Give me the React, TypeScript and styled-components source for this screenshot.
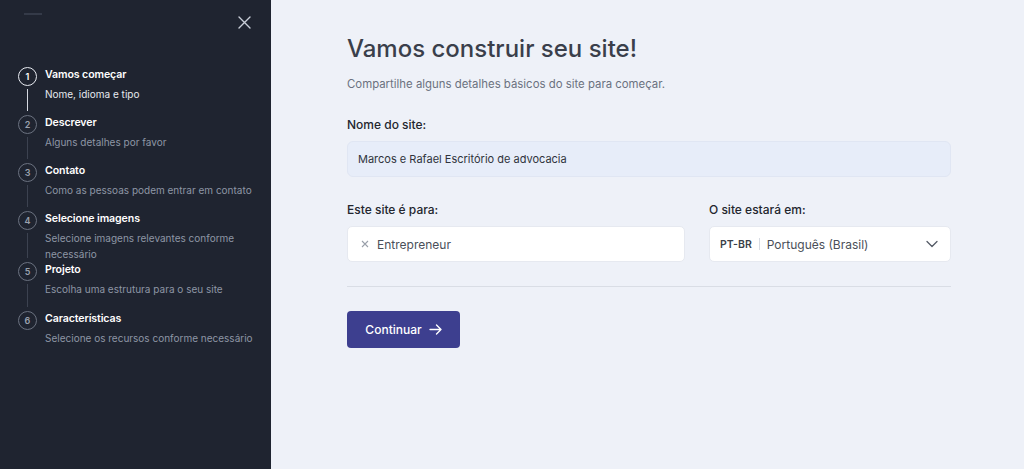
import React from "react";
import styled, { createGlobalStyle } from "styled-components";

const Global = createGlobalStyle`
  html, body { margin: 0; padding: 0; }
  body { font-family: Inter, "Noto Sans", sans-serif; background: #eef1f8; }
  #root { height: 469px; }
  * { box-sizing: border-box; }
`;

const Page = styled.div`
  display: flex;
  width: 1024px;
  height: 469px;
  overflow: hidden;
`;

const Sidebar = styled.aside`
  width: 271px;
  flex: none;
  background: #1f2430;
  display: flex;
  flex-direction: column;
  padding: 13px 0 0 18px;
`;

const SideTop = styled.div`
  display: flex;
  justify-content: space-between;
  align-items: flex-start;
  padding-right: 20px;
  height: 54px;
`;

const LogoBar = styled.div`
  width: 18px;
  height: 2px;
  margin: 0 0 0 6px;
  background: #343a48;
`;

const CloseBtn = styled.button`
  background: none;
  border: 0;
  padding: 0;
  margin-top: 3px;
  color: #c9ced8;
  display: flex;
`;

const Steps = styled.ol`
  list-style: none;
  margin: 0;
  padding: 0;
  display: flex;
  flex-direction: column;
`;

const Step = styled.li<{ $h: number }>`
  display: flex;
  gap: 8px;
  height: ${(p) => p.$h}px;
`;

const Marker = styled.div`
  width: 19px;
  flex: none;
  display: flex;
  flex-direction: column;
  align-items: center;
`;

const Circle = styled.div<{ $active?: boolean }>`
  width: 19px;
  height: 19px;
  border-radius: 50%;
  border: 1.5px solid ${(p) => (p.$active ? "#e8ebf1" : "#6b7280")};
  color: ${(p) => (p.$active ? "#ffffff" : "#9aa1ae")};
  font-size: 9px;
  font-weight: 600;
  display: flex;
  align-items: center;
  justify-content: center;
  flex: none;
`;

const Line = styled.div<{ $active?: boolean }>`
  width: 1px;
  flex: 1;
  margin: 3px 0 4px;
  background: ${(p) => (p.$active ? "#d5d9e0" : "#3c4250")};
`;

const StepText = styled.div`
  flex: 1;
  display: flex;
  flex-direction: column;
  padding-top: 1px;
`;

const StepTitle = styled.div`
  color: #ffffff;
  font-size: 10.6px;
  font-weight: 600;
  line-height: 14px;
  margin-bottom: 4px;
  letter-spacing: -0.1px;
`;

const StepSub = styled.div<{ $active?: boolean }>`
  color: ${(p) => (p.$active ? "#e6e9ef" : "#8e96a5")};
  font-size: 10px;
  line-height: 16px;
  max-width: 214px;
`;

const Main = styled.main`
  flex: 1;
  padding: 34px 73px 0 76px;
`;

const Content = styled.div`
  width: 604px;
  display: flex;
  flex-direction: column;
`;

const Title = styled.h1`
  margin: 0;
  font-size: 24px;
  font-weight: 500;
  color: #3a3f4b;
  line-height: 30px;
`;

const Lead = styled.p`
  margin: 12px 0 0;
  font-size: 11.4px;
  color: #6b7280;
  line-height: 16px;
`;

const Label = styled.label`
  display: block;
  font-size: 12px;
  font-weight: 500;
  color: #23262e;
  line-height: 16px;
  margin-bottom: 8px;
`;

const Field = styled.div<{ $mt: number }>`
  margin-top: ${(p) => p.$mt}px;
`;

const NameInput = styled.div`
  height: 36px;
  border-radius: 6px;
  background: #e7edf9;
  border: 1px solid #e0e6f3;
  display: flex;
  align-items: center;
  padding: 0 10px;
  font-size: 11px;
  color: #30343c;
`;

const Row = styled.div`
  display: grid;
  grid-template-columns: 338px 242px;
  gap: 24px;
  margin-top: 25px;
`;

const Box = styled.div`
  height: 36px;
  border-radius: 5px;
  background: #ffffff;
  border: 1px solid #e6e9f0;
  display: flex;
  align-items: center;
  font-size: 12px;
  color: #4a4f59;
`;

const TagBox = styled(Box)`
  padding: 0 13px;
  gap: 8px;
`;

const RemoveX = styled.span`
  color: #9aa0aa;
  font-size: 11px;
  display: flex;
`;

const LangBox = styled(Box)`
  padding: 0 12px 0 10px;
`;

const LangCode = styled.span`
  font-size: 10.5px;
  font-weight: 600;
  color: #3a3f49;
`;

const Sep = styled.span`
  width: 1px;
  height: 12px;
  background: #d7dbe3;
  margin: 0 7px;
`;

const LangName = styled.span`
  flex: 1;
`;

const Divider = styled.hr`
  border: 0;
  border-top: 1px solid #d9dde5;
  margin: 24px 0 0;
`;

const Button = styled.button`
  margin-top: 24px;
  align-self: flex-start;
  width: 113px;
  height: 37px;
  border: 0;
  border-radius: 4px;
  background: #3d3f8f;
  color: #ffffff;
  font-family: inherit;
  font-size: 12px;
  font-weight: 500;
  display: flex;
  align-items: center;
  justify-content: center;
  gap: 7px;
`;

const steps = [
  { n: 1, title: "Vamos começar", sub: "Nome, idioma e tipo", h: 48 },
  { n: 2, title: "Descrever", sub: "Alguns detalhes por favor", h: 48 },
  { n: 3, title: "Contato", sub: "Como as pessoas podem entrar em contato", h: 48 },
  { n: 4, title: "Selecione imagens", sub: "Selecione imagens relevantes conforme necessário", h: 51 },
  { n: 5, title: "Projeto", sub: "Escolha uma estrutura para o seu site", h: 49 },
  { n: 6, title: "Características", sub: "Selecione os recursos conforme necessário", h: 48 },
];

export default function App() {
  return (
    <>
      <Global />
      <Page>
        <Sidebar>
          <SideTop>
            <LogoBar />
            <CloseBtn aria-label="Fechar">
              <svg width="13" height="13" viewBox="0 0 13 13" fill="none" stroke="currentColor" strokeWidth="1.4" strokeLinecap="round">
                <path d="M1 1l11 11M12 1L1 12" />
              </svg>
            </CloseBtn>
          </SideTop>
          <Steps>
            {steps.map((s, i) => (
              <Step key={s.n} $h={s.h}>
                <Marker>
                  <Circle $active={i === 0}>{s.n}</Circle>
                  {i < steps.length - 1 && <Line $active={i === 0} />}
                </Marker>
                <StepText>
                  <StepTitle>{s.title}</StepTitle>
                  <StepSub $active={i === 0}>{s.sub}</StepSub>
                </StepText>
              </Step>
            ))}
          </Steps>
        </Sidebar>
        <Main>
          <Content>
            <Title>Vamos construir seu site!</Title>
            <Lead>Compartilhe alguns detalhes básicos do site para começar.</Lead>
            <Field $mt={25}>
              <Label>Nome do site:</Label>
              <NameInput>Marcos e Rafael Escritório de advocacia</NameInput>
            </Field>
            <Row>
              <div>
                <Label>Este site é para:</Label>
                <TagBox>
                  <RemoveX>
                    <svg width="8" height="8" viewBox="0 0 8 8" stroke="currentColor" strokeWidth="1.1">
                      <path d="M1 1l6 6M7 1L1 7" />
                    </svg>
                  </RemoveX>
                  Entrepreneur
                </TagBox>
              </div>
              <div>
                <Label>O site estará em:</Label>
                <LangBox>
                  <LangCode>PT-BR</LangCode>
                  <Sep />
                  <LangName>Português (Brasil)</LangName>
                  <svg width="12" height="8" viewBox="0 0 12 8" fill="none" stroke="#555b66" strokeWidth="1.3" strokeLinecap="round" strokeLinejoin="round">
                    <path d="M1 1.5l5 5 5-5" />
                  </svg>
                </LangBox>
              </div>
            </Row>
            <Divider />
            <Button>
              Continuar
              <svg width="13" height="11" viewBox="0 0 13 11" fill="none" stroke="currentColor" strokeWidth="1.4" strokeLinecap="round" strokeLinejoin="round">
                <path d="M1 5.5h11M7.5 1l4.5 4.5L7.5 10" />
              </svg>
            </Button>
          </Content>
        </Main>
      </Page>
    </>
  );
}
